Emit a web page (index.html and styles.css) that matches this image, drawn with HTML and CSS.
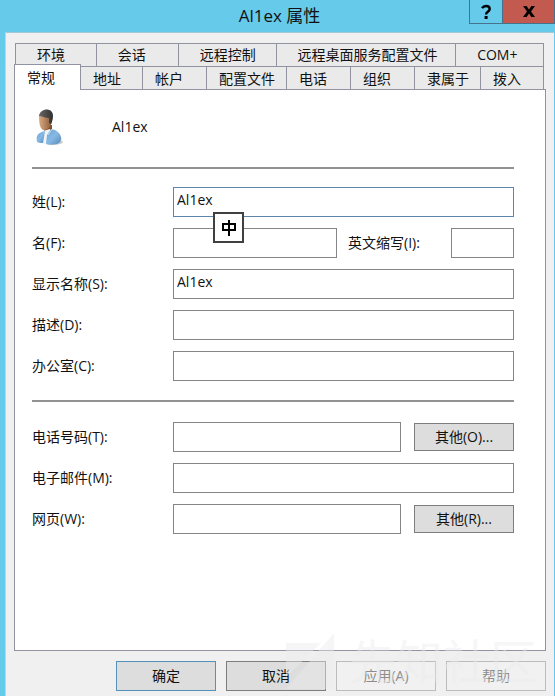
FILE: index.html
```html
<!DOCTYPE html>
<html lang="zh-CN">
<head>
<meta charset="utf-8">
<title>Al1ex 属性</title>
<link rel="stylesheet" href="styles.css">
</head>
<body>
<main class="window">
  <header class="titlebar">
    <h1 class="title">Al1ex 属性</h1>
    <div class="caption-buttons">
      <button class="caption help" type="button" aria-label="帮助主题">
        <svg width="12" height="16" viewBox="0 0 12 16"><path d="M2 4.200C3 2.700 4.500 2 6 2c2.400 0 3.700 1.200 3.700 3 0 2.800-3.700 2.800-3.700 5.500" fill="none" stroke="#000" stroke-width="2.400"/><rect x="4.600" y="12" width="3" height="3"/></svg>
      </button>
      <button class="caption close" type="button" aria-label="关闭">
        <svg width="12" height="11" viewBox="0 0 12 11"><path d="M0 0h3.600L6 3.500 8.400 0H12L8 5.500l4 5.500H8.400L6 7.500 3.600 11H0l4-5.500z"/></svg>
      </button>
    </div>
  </header>
  <form class="client">
    <div class="tabs" role="tablist">
      <div class="tab-row back">
        <button class="tab" type="button" role="tab">环境</button>
        <button class="tab" type="button" role="tab">会话</button>
        <button class="tab" type="button" role="tab">远程控制</button>
        <button class="tab" type="button" role="tab">远程桌面服务配置文件</button>
        <button class="tab" type="button" role="tab">COM+</button>
      </div>
      <div class="tab-row front">
        <button class="tab selected" type="button" role="tab" aria-selected="true">常规</button>
        <button class="tab" type="button" role="tab">地址</button>
        <button class="tab" type="button" role="tab">帐户</button>
        <button class="tab" type="button" role="tab">配置文件</button>
        <button class="tab" type="button" role="tab">电话</button>
        <button class="tab" type="button" role="tab">组织</button>
        <button class="tab" type="button" role="tab">隶属于</button>
        <button class="tab" type="button" role="tab">拨入</button>
      </div>
    </div>
    <section class="panel" role="tabpanel">
      <div class="identity">
        <svg class="avatar" width="28" height="38" viewBox="0 0 28 38" aria-hidden="true">
          <defs>
            <linearGradient id="skin" x1="0" x2="1"><stop offset="0" stop-color="#d9ac82"/><stop offset="1" stop-color="#8a5836"/></linearGradient>
            <linearGradient id="shirt" x1="0" x2="1" y2="1"><stop offset="0" stop-color="#70a5d3"/><stop offset=".5" stop-color="#86b9e4"/><stop offset="1" stop-color="#5589b8"/></linearGradient>
            <linearGradient id="hair" x1="0" x2="1"><stop offset="0" stop-color="#696763"/><stop offset="1" stop-color="#303030"/></linearGradient>
          </defs>
          <ellipse cx="17" cy="34" rx="10" ry="3" fill="#ccc"/>
          <path d="M8 17h8v10H8z" fill="#80502f"/>
          <path d="M7 23l7-2 2 15H7z" fill="#f0f3f6"/>
          <path d="M1 34c-1-6 0-9 8-11L7 35c-2 0-4 0-6-1z" fill="url(#shirt)"/>
          <path d="M10 36l1-9 4-6c6 1 9 4 10 8 1 3-1 6-4 7-4 1-8 1-11 0z" fill="url(#shirt)"/>
          <path d="M12 27l4-6" fill="none" stroke="#bddcf3"/>
          <path d="M3 8c0-4 13-5 13 3 0 6-3 11-8 11-4 0-5-7-5-14z" fill="url(#skin)"/>
          <path d="M3 8C4 0 17-1 17 8c0 3-1 6-2 8l-2-1V10C9 10 6 8 3 8z" fill="url(#hair)"/>
        </svg>
        <span>Al1ex</span>
      </div>
      <hr class="rule">
      <div class="fields">
        <div class="field">
          <label for="surname">姓(L):</label>
          <div class="controls">
            <input id="surname" class="box active" type="text" value="Al1ex">
            <span class="ime"><svg width="16" height="18" viewBox="0 0 16 18" role="img" aria-label="中文输入"><path d="M2 5h12v6H2zM8 1v16" fill="none" stroke="#000" stroke-width="2"/></svg></span>
          </div>
        </div>
        <div class="field">
          <label for="given">名(F):</label>
          <div class="controls names">
            <input id="given" class="box" type="text">
            <label class="initials-label" for="initials">英文缩写(I):</label>
            <input id="initials" class="box initials" type="text">
          </div>
        </div>
        <div class="field">
          <label for="display">显示名称(S):</label>
          <div class="controls"><input id="display" class="box" type="text" value="Al1ex"></div>
        </div>
        <div class="field">
          <label for="description">描述(D):</label>
          <div class="controls"><input id="description" class="box" type="text"></div>
        </div>
        <div class="field">
          <label for="office">办公室(C):</label>
          <div class="controls"><input id="office" class="box" type="text"></div>
        </div>
      </div>
      <hr class="rule">
      <div class="fields">
        <div class="field">
          <label for="phone">电话号码(T):</label>
          <div class="controls"><input id="phone" class="box" type="text"><button class="push small" type="button">其他(O)...</button></div>
        </div>
        <div class="field">
          <label for="email">电子邮件(M):</label>
          <div class="controls"><input id="email" class="box" type="text"></div>
        </div>
        <div class="field">
          <label for="web">网页(W):</label>
          <div class="controls"><input id="web" class="box" type="text"><button class="push small" type="button">其他(R)...</button></div>
        </div>
      </div>
    </section>
    <footer class="actions">
      <button class="push default" type="button">确定</button>
      <button class="push" type="button">取消</button>
      <button class="push" type="button" disabled>应用(A)</button>
      <button class="push" type="button" disabled>帮助</button>
    </footer>
  </form>
  <div class="watermark">
    <svg width="52" height="56" viewBox="0 0 52 56" aria-hidden="true"><path d="M2 10h35L2 44zM50 0v56H2z"/></svg>
    <span>先知社区</span>
  </div>
</main>
</body>
</html>
```
FILE: styles.css
```css
* {
  box-sizing: border-box;
}

body {
  margin: 0;
  font: 14px/20px "Open Sans", "Noto Sans CJK SC", sans-serif;
  color: #111;
}

button,
input {
  font: inherit;
  color: inherit;
  margin: 0;
  border-radius: 0;
}

.window {
  position: relative;
  display: flex;
  flex-direction: column;
  min-height: 100vh;
  padding: 0 1px 0 5px;
  background: #66caea;
}

.titlebar {
  position: relative;
  display: flex;
  justify-content: center;
  height: 32px;
}

.title {
  margin: 0;
  font-size: 17px;
  font-weight: 400;
  line-height: 32px;
}

.caption-buttons {
  position: absolute;
  top: 0;
  right: -1px;
  display: flex;
}

.caption {
  display: flex;
  align-items: center;
  justify-content: center;
  height: 24px;
  padding: 0;
  border: 1px solid #47738a;
  border-top: 0;
}

.help {
  width: 34px;
  background: #66caea;
}

.close {
  width: 52px;
  border-left: 0;
  background: #c35a50;
}

.client {
  flex: 1;
  display: flex;
  flex-direction: column;
  padding: 10px 8px 5px;
  border-top: 1px solid #a3c9d8;
  border-left: 1px solid #a9dcec;
  background: #f0f0f0;
}

.tab-row {
  display: grid;
  height: 23px;
  margin-right: 2px;
}

.back {
  grid-template-columns: 82fr 82fr 98fr 180fr 88fr;
  margin-left: 1px;
}

.front {
  grid-template-columns: 67fr 62fr 64fr 80fr 64fr 64fr 66fr 63fr;
}

.tab {
  padding: 0 0 0 12px;
  border: 1px solid #9293a0;
  border-width: 1px 1px 0;
  background: #eaeaea;
  line-height: 20px;
  text-align: left;
  white-space: nowrap;
}

.tab + .tab {
  border-left: 0;
}

.back .tab {
  padding-left: 21px;
}

.tab.selected {
  z-index: 1;
  height: 26px;
  margin-top: -2px;
  background: #fff;
}

.panel {
  flex: 1;
  padding: 15px 31px 20px 17px;
  border: 1px solid #9293a0;
  background: #fff;
}

.identity {
  display: flex;
  align-items: center;
  gap: 48px;
  height: 44px;
  padding-left: 4px;
}

.rule {
  height: 2px;
  margin: 18px 0;
  border: 0;
  background: #929292;
}

.fields + .rule {
  margin: 19px 0 20px;
}

.fields {
  display: grid;
  gap: 11px;
}

.field {
  display: grid;
  grid-template-columns: 141px minmax(0, 1fr);
  align-items: center;
}

.controls {
  position: relative;
  display: flex;
  align-items: center;
  gap: 13px;
}

.names {
  gap: 11px;
}

.box {
  flex: 1;
  min-width: 0;
  height: 30px;
  padding: 0 3px 5px;
  border: 1px solid #858585;
  background: #fff;
}

.box.active {
  border-color: #6085aa;
}

.initials-label {
  width: 92px;
}

.initials {
  flex: none;
  width: 63px;
}

.ime {
  position: absolute;
  top: 25px;
  left: 40px;
  z-index: 1;
  display: grid;
  place-items: center;
  width: 31px;
  height: 31px;
  border: 2px solid #404040;
  background: #fff;
}

.push {
  width: 100px;
  height: 30px;
  padding: 0;
  border: 1px solid #7e7e7e;
  background: #ddd;
}

.push.small {
  height: 28px;
}

.push.default {
  border-color: #5490bc;
}

.push:disabled {
  border-color: #bcbcbc;
  background: #f1f1f1;
  color: #8d8d8d;
}

.actions {
  display: flex;
  justify-content: flex-end;
  gap: 10px;
  padding-top: 10px;
}

.watermark {
  position: absolute;
  right: 18px;
  bottom: 7px;
  display: flex;
  align-items: center;
  gap: 13px;
  color: rgba(236, 236, 236, 0.45);
  font-size: 47px;
  line-height: 56px;
  pointer-events: none;
}

.watermark svg {
  fill: currentColor;
}
```
